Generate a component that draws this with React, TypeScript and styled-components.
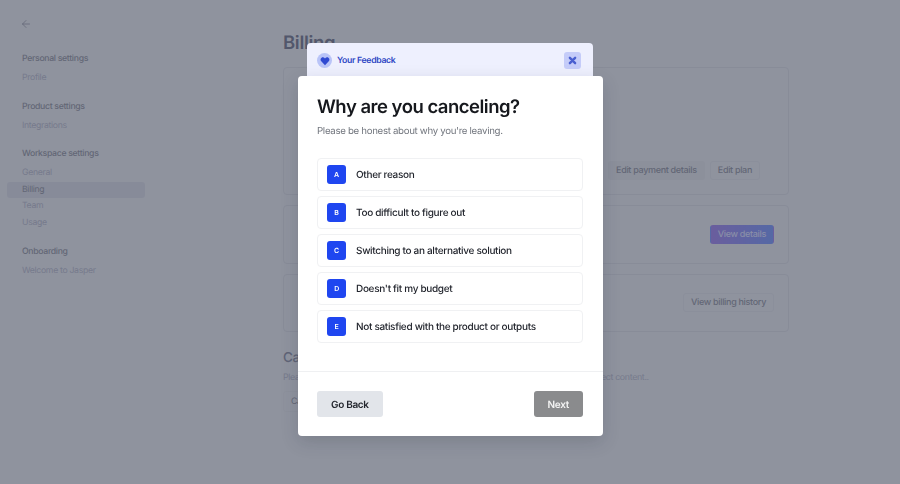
import React from 'react';
import styled, { createGlobalStyle } from 'styled-components';
import { ArrowLeft } from 'lucide-react';

const GlobalStyle = createGlobalStyle`
  html, body { margin: 0; padding: 0; }
  body {
    font-family: Inter, "Liberation Sans", sans-serif;
    text-rendering: geometricPrecision;
    letter-spacing: -0.02em;
  }
`;

const Page = styled.div`
  position: relative;
  display: flex;
  width: 900px;
  height: 484px;
  overflow: hidden;
  background: #d3d6de;
`;

const Sidebar = styled.aside`
  width: 138px;
  margin-left: 7px;
  padding-top: 18px;
  flex-shrink: 0;
`;

const BackIcon = styled(ArrowLeft)`
  display: block;
  width: 12px;
  height: 12px;
  margin: 0 0 21px 13px;
  color: #8f92a0;
`;

const NavGroup = styled.div`
  margin-bottom: 12px;
`;

const NavHeading = styled.div`
  height: 16px;
  padding-left: 15px;
  margin-bottom: 3px;
  font-size: 8.7px;
  line-height: 16px;
  font-weight: 500;
  color: #8f92a0;
`;

const NavItem = styled.div<{ $active?: boolean }>`
  height: 16.6px;
  padding-left: 15px;
  border-radius: 3px;
  font-size: 8.7px;
  line-height: 16.6px;
  color: ${(p) => (p.$active ? '#8f92a0' : '#adb0c2')};
  background: ${(p) => (p.$active ? '#c7cad6' : 'transparent')};
`;

const Main = styled.main`
  width: 506px;
  margin-left: 138px;
  padding-top: 31px;
`;

const Title = styled.h1`
  margin: 0 0 11px;
  font-size: 18.5px;
  line-height: 25px;
  font-weight: 600;
  color: #757a90;
`;

const Card = styled.section<{ $height: number; $align: string; $inset: number }>`
  display: flex;
  justify-content: flex-end;
  align-items: ${(p) => p.$align};
  gap: 5px;
  height: ${(p) => p.$height}px;
  box-sizing: border-box;
  margin-bottom: 9.5px;
  padding: 14px ${(p) => p.$inset}px 14px 15px;
  border: 1px solid #c8cbd5;
  border-radius: 4px;
`;

const CardButton = styled.div<{ $primary?: boolean; $plain?: boolean }>`
  height: 19px;
  padding: 0 7px;
  border-radius: 3px;
  box-sizing: border-box;
  border: 1px solid ${(p) => (p.$primary || p.$plain ? 'transparent' : '#cdd0d9')};
  font-size: 9px;
  line-height: 17px;
  font-weight: 500;
  color: ${(p) => (p.$primary ? '#c9cdec' : '#8f92a0')};
  background: ${(p) =>
    p.$primary
      ? 'linear-gradient(90deg, #9a84dc, #7a95e8)'
      : p.$plain
        ? '#ced1d9'
        : 'transparent'};
`;

const CancelHeading = styled.h2`
  margin: 16.5px 0 0;
  font-size: 13.5px;
  line-height: 20px;
  font-weight: 500;
  color: #8a8ea2;
`;

const CancelText = styled.p`
  margin: 2px 0 3px;
  font-size: 8.8px;
  line-height: 15px;
  white-space: nowrap;
  color: #adb0c2;
`;

const CancelButton = styled.div`
  display: inline-block;
  height: 19px;
  padding: 0 7px;
  border: 1px solid #cfd2da;
  border-radius: 3px;
  font-size: 8.8px;
  line-height: 19px;
  color: #8f92a0;
`;

const Overlay = styled.div`
  position: absolute;
  inset: 0;
  display: flex;
  flex-direction: column;
  align-items: center;
  padding-top: 43px;
  background: rgba(17, 24, 39, 0.35);
  backdrop-filter: blur(0.7px);
`;

const FeedbackBar = styled.div`
  display: flex;
  align-items: center;
  gap: 5px;
  width: 286px;
  height: 33px;
  box-sizing: border-box;
  padding: 2px 12px 0 10px;
  border-radius: 4px 4px 0 0;
  background: #eef0fe;
`;

const HeartBadge = styled.div`
  display: flex;
  align-items: center;
  justify-content: center;
  width: 15px;
  height: 15px;
  border-radius: 50%;
  background: #b9c4f8;
`;

const FeedbackLabel = styled.span`
  flex: 1;
  font-size: 8.7px;
  font-weight: 600;
  color: #2d46c4;
`;

const CloseButton = styled.div`
  display: flex;
  align-items: center;
  justify-content: center;
  width: 17px;
  height: 17px;
  border-radius: 3px;
  background: #c5ccf9;
`;

const Modal = styled.div`
  width: 305px;
  height: 360px;
  border-radius: 4px;
  background: #fff;
  box-shadow: 0 6px 18px rgba(17, 24, 39, 0.16);
`;

const ModalBody = styled.div`
  height: 296px;
  box-sizing: border-box;
  padding: 19px 19.5px 0;
  border-bottom: 1px solid #eff0f2;
`;

const Heading = styled.h2`
  margin: 0;
  font-size: 18.5px;
  line-height: 25px;
  font-weight: 600;
  letter-spacing: -0.5px;
  color: #16181d;
`;

const Subtitle = styled.p`
  margin: 5px 0 19px;
  font-size: 9.7px;
  line-height: 14px;
  color: #73777f;
`;

const Options = styled.div`
  display: flex;
  flex-direction: column;
  gap: 5px;
`;

const Option = styled.div`
  display: flex;
  align-items: center;
  gap: 10px;
  height: 33px;
  box-sizing: border-box;
  padding-left: 9px;
  border: 1px solid #f0f1f3;
  border-radius: 4px;
`;

const LetterBadge = styled.span`
  display: flex;
  align-items: center;
  justify-content: center;
  width: 19px;
  height: 19px;
  border-radius: 3px;
  font-size: 7px;
  font-weight: 600;
  color: #fff;
  background: #1f46f0;
`;

const OptionLabel = styled.span`
  padding-top: 1px;
  font-size: 10px;
  font-weight: 500;
  color: #22252d;
`;

const Footer = styled.div`
  display: flex;
  justify-content: space-between;
  padding: 19px 19.5px 0;
`;

const FooterButton = styled.div<{ $next?: boolean }>`
  height: 26px;
  padding: 0 14px;
  border-radius: 3px;
  font-size: 10px;
  line-height: 28px;
  font-weight: 600;
  color: ${(p) => (p.$next ? '#f4f4f4' : '#22252d')};
  background: ${(p) => (p.$next ? '#8a8b8d' : '#e2e5ea')};
`;

const navGroups = [
  { heading: 'Personal settings', items: ['Profile'] },
  { heading: 'Product settings', items: ['Integrations'] },
  { heading: 'Workspace settings', items: ['General', 'Billing', 'Team', 'Usage'] },
  { heading: 'Onboarding', items: ['Welcome to Jasper'] },
];

const reasons = [
  'Other reason',
  'Too difficult to figure out',
  'Switching to an alternative solution',
  "Doesn't fit my budget",
  'Not satisfied with the product or outputs',
];

export default function App() {
  return (
    <Page>
      <GlobalStyle />
      <Sidebar>
        <BackIcon strokeWidth={1.5} />
        {navGroups.map((group) => (
          <NavGroup key={group.heading}>
            <NavHeading>{group.heading}</NavHeading>
            {group.items.map((item) => (
              <NavItem key={item} $active={item === 'Billing'}>
                {item}
              </NavItem>
            ))}
          </NavGroup>
        ))}
      </Sidebar>
      <Main>
        <Title>Billing</Title>
        <Card $height={128} $align="flex-end" $inset={28}>
          <CardButton $plain>Edit payment details</CardButton>
          <CardButton>Edit plan</CardButton>
        </Card>
        <Card $height={59.5} $align="center" $inset={14}>
          <CardButton $primary>View details</CardButton>
        </Card>
        <Card $height={58} $align="center" $inset={14}>
          <CardButton>View billing history</CardButton>
        </Card>
        <CancelHeading>Cancel subscription</CancelHeading>
        <CancelText>Please note that canceling your membership will remove access to your saved project content..</CancelText>
        <CancelButton>Cancel</CancelButton>
      </Main>
      <Overlay>
        <FeedbackBar>
          <HeartBadge>
            <svg width="10" height="10" viewBox="0 0 24 24" fill="#2f49d1">
              <path d="M12 22 3 12.5C.5 9.7 1 5.6 3.8 3.9c2.8-1.7 6-.8 8.2 2 2.2-2.8 5.4-3.7 8.2-2 2.8 1.7 3.3 5.8.8 8.6L12 22Z" />
            </svg>
          </HeartBadge>
          <FeedbackLabel>Your Feedback</FeedbackLabel>
          <CloseButton>
            <svg width="9" height="9" viewBox="0 0 24 24" stroke="#4a5fd0" strokeWidth="6.5" strokeLinecap="round">
              <path d="M5 5l14 14M19 5 5 19" />
            </svg>
          </CloseButton>
        </FeedbackBar>
        <Modal>
          <ModalBody>
            <Heading>Why are you canceling?</Heading>
            <Subtitle>Please be honest about why you're leaving.</Subtitle>
            <Options>
              {reasons.map((reason, i) => (
                <Option key={reason}>
                  <LetterBadge>{'ABCDE'[i]}</LetterBadge>
                  <OptionLabel>{reason}</OptionLabel>
                </Option>
              ))}
            </Options>
          </ModalBody>
          <Footer>
            <FooterButton>Go Back</FooterButton>
            <FooterButton $next>Next</FooterButton>
          </Footer>
        </Modal>
      </Overlay>
    </Page>
  );
}
